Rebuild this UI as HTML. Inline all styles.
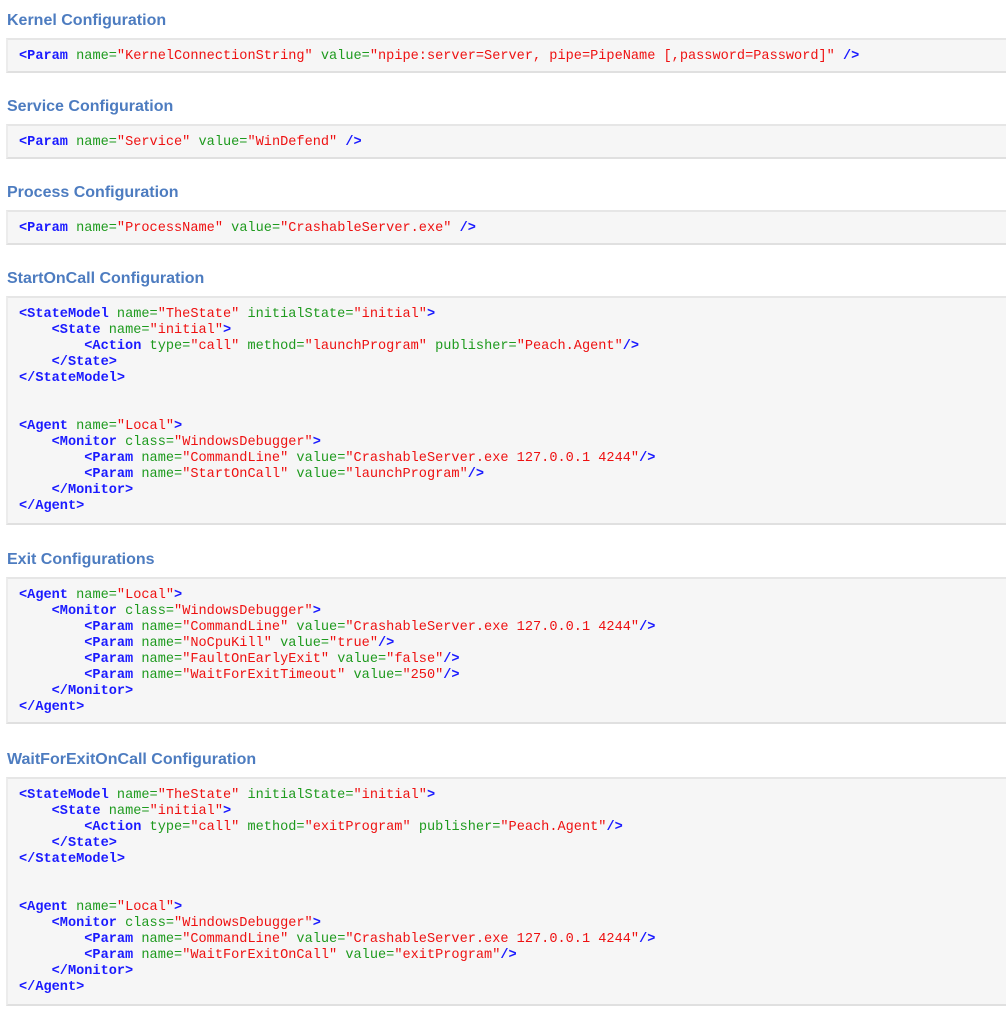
<!DOCTYPE html>
<html><head><meta charset="utf-8"><style>
html,body{margin:0;padding:0;background:#fff;width:1006px;height:1024px;overflow:hidden;position:relative}
h2{position:absolute;left:7px;margin:0;font:bold 16px/20px "Liberation Sans",Arial,sans-serif;color:#4d7cc0}
.box{position:absolute;left:6px;width:1010px;background:#f6f6f6;border-top:2px solid #e6e6e6;border-bottom:2px solid #e0e0e0;border-left:2px solid #ececec;box-sizing:border-box}
pre{margin:0;padding:9px 0 0 11px;font:13.6px/16px "Liberation Mono","Courier New",monospace;white-space:pre;color:#000}
.t{color:#1a1aff;font-weight:bold}
.a{color:#1e9a1e}
.v{color:#ee1111}
</style></head><body>
<h2 style="top:11px">Kernel Configuration</h2>
<div class="box" style="top:38px;height:35px"><pre><span class="t">&lt;Param</span> <span class="a">name=</span><span class="v">"KernelConnectionString"</span> <span class="a">value=</span><span class="v">"npipe:server=Server, pipe=PipeName [,password=Password]"</span> <span class="t">/&gt;</span></pre></div>

<h2 style="top:97px">Service Configuration</h2>
<div class="box" style="top:124px;height:35px"><pre><span class="t">&lt;Param</span> <span class="a">name=</span><span class="v">"Service"</span> <span class="a">value=</span><span class="v">"WinDefend"</span> <span class="t">/&gt;</span></pre></div>

<h2 style="top:183px">Process Configuration</h2>
<div class="box" style="top:210px;height:35px"><pre><span class="t">&lt;Param</span> <span class="a">name=</span><span class="v">"ProcessName"</span> <span class="a">value=</span><span class="v">"CrashableServer.exe"</span> <span class="t">/&gt;</span></pre></div>

<h2 style="top:269px">StartOnCall Configuration</h2>
<div class="box" style="top:296px;height:229px"><pre><span class="t">&lt;StateModel</span> <span class="a">name=</span><span class="v">"TheState"</span> <span class="a">initialState=</span><span class="v">"initial"</span><span class="t">&gt;</span>
    <span class="t">&lt;State</span> <span class="a">name=</span><span class="v">"initial"</span><span class="t">&gt;</span>
        <span class="t">&lt;Action</span> <span class="a">type=</span><span class="v">"call"</span> <span class="a">method=</span><span class="v">"launchProgram"</span> <span class="a">publisher=</span><span class="v">"Peach.Agent"</span><span class="t">/&gt;</span>
    <span class="t">&lt;/State&gt;</span>
<span class="t">&lt;/StateModel&gt;</span>


<span class="t">&lt;Agent</span> <span class="a">name=</span><span class="v">"Local"</span><span class="t">&gt;</span>
    <span class="t">&lt;Monitor</span> <span class="a">class=</span><span class="v">"WindowsDebugger"</span><span class="t">&gt;</span>
        <span class="t">&lt;Param</span> <span class="a">name=</span><span class="v">"CommandLine"</span> <span class="a">value=</span><span class="v">"CrashableServer.exe 127.0.0.1 4244"</span><span class="t">/&gt;</span>
        <span class="t">&lt;Param</span> <span class="a">name=</span><span class="v">"StartOnCall"</span> <span class="a">value=</span><span class="v">"launchProgram"</span><span class="t">/&gt;</span>
    <span class="t">&lt;/Monitor&gt;</span>
<span class="t">&lt;/Agent&gt;</span></pre></div>

<h2 style="top:550px">Exit Configurations</h2>
<div class="box" style="top:577px;height:147px"><pre><span class="t">&lt;Agent</span> <span class="a">name=</span><span class="v">"Local"</span><span class="t">&gt;</span>
    <span class="t">&lt;Monitor</span> <span class="a">class=</span><span class="v">"WindowsDebugger"</span><span class="t">&gt;</span>
        <span class="t">&lt;Param</span> <span class="a">name=</span><span class="v">"CommandLine"</span> <span class="a">value=</span><span class="v">"CrashableServer.exe 127.0.0.1 4244"</span><span class="t">/&gt;</span>
        <span class="t">&lt;Param</span> <span class="a">name=</span><span class="v">"NoCpuKill"</span> <span class="a">value=</span><span class="v">"true"</span><span class="t">/&gt;</span>
        <span class="t">&lt;Param</span> <span class="a">name=</span><span class="v">"FaultOnEarlyExit"</span> <span class="a">value=</span><span class="v">"false"</span><span class="t">/&gt;</span>
        <span class="t">&lt;Param</span> <span class="a">name=</span><span class="v">"WaitForExitTimeout"</span> <span class="a">value=</span><span class="v">"250"</span><span class="t">/&gt;</span>
    <span class="t">&lt;/Monitor&gt;</span>
<span class="t">&lt;/Agent&gt;</span></pre></div>

<h2 style="top:750px">WaitForExitOnCall Configuration</h2>
<div class="box" style="top:777px;height:229px"><pre><span class="t">&lt;StateModel</span> <span class="a">name=</span><span class="v">"TheState"</span> <span class="a">initialState=</span><span class="v">"initial"</span><span class="t">&gt;</span>
    <span class="t">&lt;State</span> <span class="a">name=</span><span class="v">"initial"</span><span class="t">&gt;</span>
        <span class="t">&lt;Action</span> <span class="a">type=</span><span class="v">"call"</span> <span class="a">method=</span><span class="v">"exitProgram"</span> <span class="a">publisher=</span><span class="v">"Peach.Agent"</span><span class="t">/&gt;</span>
    <span class="t">&lt;/State&gt;</span>
<span class="t">&lt;/StateModel&gt;</span>


<span class="t">&lt;Agent</span> <span class="a">name=</span><span class="v">"Local"</span><span class="t">&gt;</span>
    <span class="t">&lt;Monitor</span> <span class="a">class=</span><span class="v">"WindowsDebugger"</span><span class="t">&gt;</span>
        <span class="t">&lt;Param</span> <span class="a">name=</span><span class="v">"CommandLine"</span> <span class="a">value=</span><span class="v">"CrashableServer.exe 127.0.0.1 4244"</span><span class="t">/&gt;</span>
        <span class="t">&lt;Param</span> <span class="a">name=</span><span class="v">"WaitForExitOnCall"</span> <span class="a">value=</span><span class="v">"exitProgram"</span><span class="t">/&gt;</span>
    <span class="t">&lt;/Monitor&gt;</span>
<span class="t">&lt;/Agent&gt;</span></pre></div>
</body></html>
